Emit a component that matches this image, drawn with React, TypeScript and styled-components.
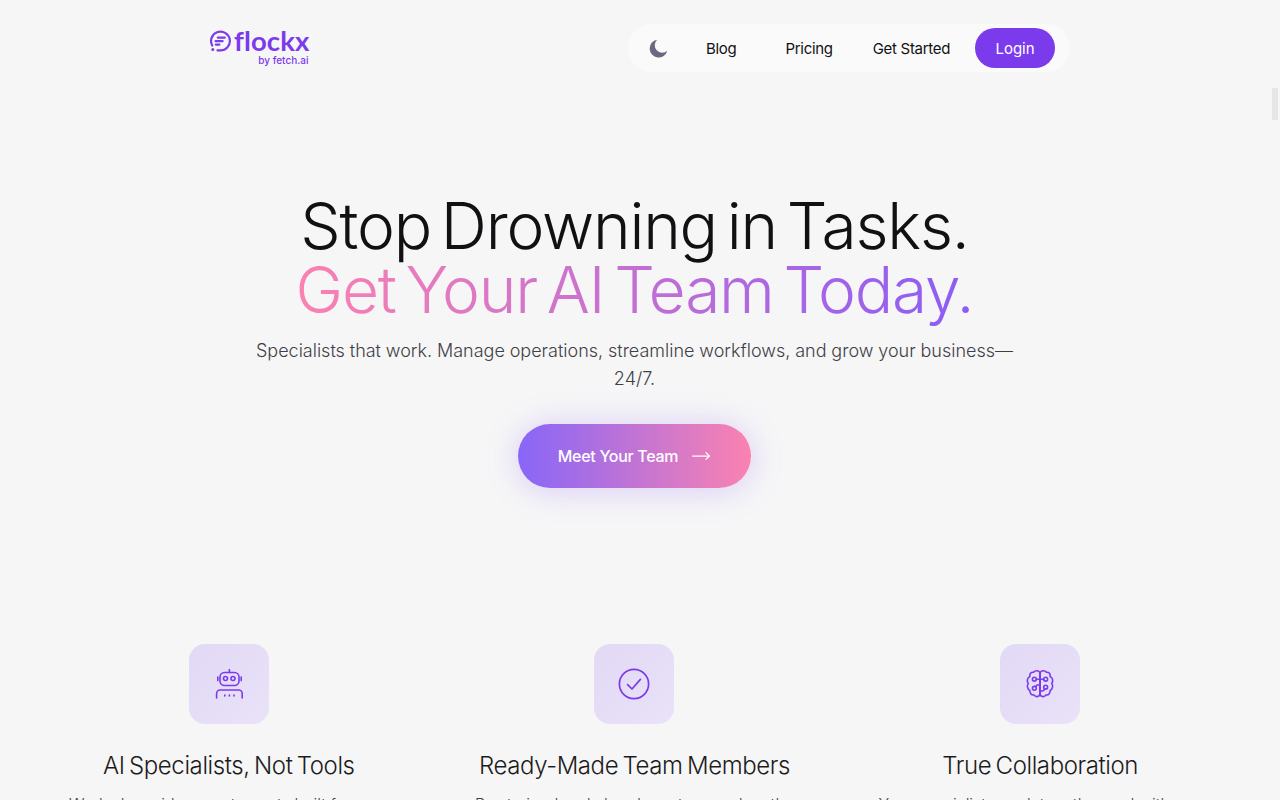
import { FC, ReactNode } from 'react';
import styled, { createGlobalStyle } from 'styled-components';
import { MoveRight } from 'lucide-react';

const GlobalStyle = createGlobalStyle`
  html, body {
    margin: 0;
    height: 800px;
    overflow: hidden;
    background: #f6f6f7;
  }
  * { box-sizing: border-box; }
`;

const Page = styled.div`
  width: 1269px;
  height: 800px;
  overflow: hidden;
  font-family: 'Inter', 'Liberation Sans', sans-serif;
  color: #111114;
`;

const ScrollThumb = styled.div`
  position: fixed;
  top: 88px;
  right: 2px;
  width: 6px;
  height: 32px;
  background: #e6e6e7;
`;

const Header = styled.header`
  display: flex;
  align-items: center;
  justify-content: space-between;
  padding: 24px 199px 0 209px;
`;

const Logo = styled.div`
  display: flex;
  flex-direction: column;
  align-items: flex-end;
  margin-bottom: 3px;
  color: #7c3aed;
`;

const LogoRow = styled.div`
  display: flex;
  align-items: center;
  gap: 3px;
  height: 28px;
`;

const LogoName = styled.span`
  font-family: 'Lato', sans-serif;
  font-size: 27.5px;
  font-weight: 700;
  line-height: 28px;
  letter-spacing: 0.1px;
`;

const LogoSub = styled.span`
  margin: -1px 1px 0 0;
  font-size: 10px;
  font-weight: 500;
  line-height: 12px;
`;

const Nav = styled.nav`
  display: flex;
  align-items: center;
  width: 442px;
  height: 48px;
  padding: 0 15px 0 21px;
  border-radius: 24px;
  background: #fafafb;
`;

const NavLink = styled.a<{ $offset: number }>`
  margin-left: ${({ $offset }) => $offset}px;
  font-size: 15px;
  letter-spacing: -0.3px;
  color: #111114;
`;

const LoginButton = styled.button`
  width: 80px;
  height: 40px;
  margin-left: auto;
  border: none;
  border-radius: 20px;
  background: #7c3aed;
  color: #fff;
  font: 400 15px 'Inter', sans-serif;
`;

const Hero = styled.section`
  display: flex;
  flex-direction: column;
  align-items: center;
  padding-top: 122px;
`;

const Title = styled.h1`
  margin: 0;
  font-size: 64px;
  font-weight: 300;
  line-height: 64px;
  letter-spacing: -1.2px;
  word-spacing: -7px;
  text-align: center;
`;

const GradientLine = styled.span`
  display: block;
  margin-bottom: -10px;
  padding-bottom: 10px;
  background: linear-gradient(90deg, #fb82b0, #8b5cf6);
  -webkit-background-clip: text;
  background-clip: text;
  color: transparent;
`;

const Subtitle = styled.p`
  width: 768px;
  margin: 15px 0 0;
  font-size: 18px;
  font-weight: 300;
  line-height: 28px;
  word-spacing: -0.2px;
  text-align: center;
  color: #3f3f46;
`;

const CtaButton = styled.button`
  display: flex;
  align-items: center;
  justify-content: center;
  gap: 13px;
  width: 233px;
  height: 64px;
  margin-top: 31px;
  border: none;
  border-radius: 32px;
  background: linear-gradient(90deg, #8766f8, #fb82b0);
  box-shadow: 0 2px 32px rgba(139, 92, 246, 0.28);
  color: #fff;
  font: 500 16px 'Inter', sans-serif;
  letter-spacing: -0.3px;
`;

const Features = styled.section`
  display: grid;
  grid-template-columns: repeat(3, 1fr);
  margin: 156px 26px 0;
`;

const Feature = styled.article`
  display: flex;
  flex-direction: column;
  align-items: center;
  text-align: center;
`;

const IconTile = styled.div`
  display: flex;
  align-items: center;
  justify-content: center;
  width: 80px;
  height: 80px;
  border-radius: 16px;
  background: linear-gradient(135deg, #e2d9f5, #e9e2f8);
  color: #7c3aed;
`;

const FeatureTitle = styled.h3`
  margin: 26px 0 0;
  font-size: 24px;
  font-weight: 300;
  line-height: 32px;
  letter-spacing: -0.4px;
  word-spacing: -2px;
  color: #1c1c20;
`;

const FeatureText = styled.p`
  width: 340px;
  margin: 10px 0 0;
  font-size: 16px;
  font-weight: 300;
  line-height: 24px;
  color: #3f3f46;
`;

const LogoMark = () => (
  <svg width="22" height="22" viewBox="0 0 22 22" fill="none" stroke="currentColor" strokeWidth="2.2" strokeLinecap="round">
    <path d="M3.2 15.5A9.4 9.4 0 1 1 10.8 20.4H8.5" />
    <circle cx="3.8" cy="19.4" r="1.5" fill="currentColor" stroke="none" />
    <path d="M8.8 7.6h7M6.6 11.2h7M6.8 14.6h3.6" />
  </svg>
);

const Moon = () => (
  <svg width="19" height="19" viewBox="0 0 20 20">
    <path d="M8.6 0.8A9.4 9.4 0 1 0 19.2 12.4 7.6 7.6 0 0 1 8.6 0.8Z" fill="#6b6880" />
  </svg>
);

const RobotIcon = () => (
  <svg width="28" height="30" viewBox="0 0 28 30" fill="none" stroke="currentColor" strokeWidth="1.6" strokeLinecap="round">
    <rect x="5" y="3.5" width="19" height="13" rx="4.5" />
    <path d="M14.4 0.6v2.9M2.8 8v3.6M26.2 8v3.6" />
    <circle cx="10.5" cy="9.5" r="2" />
    <circle cx="18" cy="9.5" r="2" />
    <path d="M1.6 29v-4.5a3.5 3.5 0 0 1 3.5-3.5h18.6a3.5 3.5 0 0 1 3.5 3.5V29" />
    <path d="M9.8 26v1M14.4 26v1M19 26v1" />
  </svg>
);

const CheckIcon = () => (
  <svg width="32" height="32" viewBox="0 0 32 32" fill="none" stroke="currentColor" strokeWidth="1.7" strokeLinecap="round" strokeLinejoin="round">
    <circle cx="16" cy="16" r="14.6" />
    <path d="M9.6 16.6l4.4 4.4 8.4-9.6" />
  </svg>
);

const BrainIcon = () => (
  <svg width="32" height="32" viewBox="0 0 30 30" fill="none" stroke="currentColor" strokeWidth="1.5" strokeLinecap="round" strokeLinejoin="round">
    <path d="M15 4.5C14 2.2 10.5 1.8 9 4 6.5 3.6 5 5.6 5.5 8 3 9 2.4 12.6 4 14.5 2.4 16.5 3.2 20 5.5 21 5.2 23.6 7 25.6 9.3 25.2 10.8 27.6 14 27.2 15 25Z" />
    <path d="M15 4.5C16 2.2 19.5 1.8 21 4 23.5 3.6 25 5.6 24.5 8 27 9 27.6 12.6 26 14.5 27.6 16.5 26.8 20 24.5 21 24.8 23.6 23 25.6 20.7 25.2 19.2 27.6 16 27.2 15 25Z" />
    <path d="M15 4.5V25" />
    <circle cx="9.7" cy="10.5" r="1.8" />
    <circle cx="20.3" cy="10.5" r="1.8" />
    <circle cx="9.7" cy="19" r="1.8" />
    <circle cx="20.3" cy="18" r="1.8" />
    <path d="M11.5 10.5H18.5M11 17.2l1.2-1.2H15M15 21.5h2.5a3 3 0 0 0 2-2" />
  </svg>
);

interface FeatureItem {
  readonly icon: ReactNode;
  readonly title: string;
  readonly text: string;
}

const features: FeatureItem[] = [
  {
    icon: <RobotIcon />,
    title: 'AI Specialists, Not Tools',
    text: 'Work alongside expert agents built for your business every day.',
  },
  {
    icon: <CheckIcon />,
    title: 'Ready-Made Team Members',
    text: 'Pre-trained and already up to speed on the work you need done.',
  },
  {
    icon: <BrainIcon />,
    title: 'True Collaboration',
    text: 'Your specialists work together and with you to get results.',
  },
];

const App: FC = () => (
  <Page>
    <GlobalStyle />
    <ScrollThumb />
    <Header>
      <Logo>
        <LogoRow>
          <LogoMark />
          <LogoName>flockx</LogoName>
        </LogoRow>
        <LogoSub>by fetch.ai</LogoSub>
      </Logo>
      <Nav>
        <Moon />
        <NavLink $offset={38}>Blog</NavLink>
        <NavLink $offset={49}>Pricing</NavLink>
        <NavLink $offset={40}>Get Started</NavLink>
        <LoginButton>Login</LoginButton>
      </Nav>
    </Header>
    <Hero>
      <Title>
        Stop Drowning in Tasks.
        <GradientLine>Get Your AI Team Today.</GradientLine>
      </Title>
      <Subtitle>
        Specialists that work. Manage operations, streamline workflows, and grow your business—24/7.
      </Subtitle>
      <CtaButton>
        Meet Your Team
        <MoveRight size={20} strokeWidth={1.5} />
      </CtaButton>
    </Hero>
    <Features>
      {features.map(({ icon, title, text }) => (
        <Feature key={title}>
          <IconTile>{icon}</IconTile>
          <FeatureTitle>{title}</FeatureTitle>
          <FeatureText>{text}</FeatureText>
        </Feature>
      ))}
    </Features>
  </Page>
);

export default App;
